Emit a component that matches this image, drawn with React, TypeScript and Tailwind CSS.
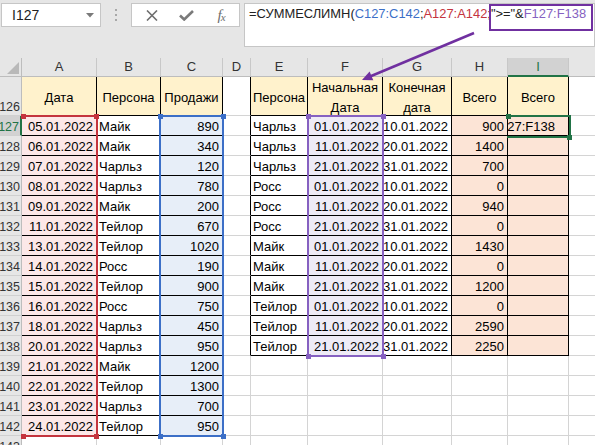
import React from 'react';

const colW = ['w-[22px]', 'w-[75px]', 'w-[64px]', 'w-[62px]', 'w-[28px]', 'w-[57px]', 'w-[75px]', 'w-[69px]', 'w-[56px]', 'w-[61px]', 'w-[30px]'];
// J is cut off by the window edge, so its letter is not shown
const letters = ['', 'A', 'B', 'C', 'D', 'E', 'F', 'G', 'H', 'I', ''];

const sales: string[][] = [
  ['05.01.2022', 'Майк', '890'],
  ['06.01.2022', 'Майк', '340'],
  ['07.01.2022', 'Чарльз', '120'],
  ['08.01.2022', 'Чарльз', '780'],
  ['09.01.2022', 'Майк', '200'],
  ['11.01.2022', 'Тейлор', '670'],
  ['13.01.2022', 'Тейлор', '1020'],
  ['14.01.2022', 'Росс', '190'],
  ['15.01.2022', 'Тейлор', '900'],
  ['16.01.2022', 'Росс', '750'],
  ['18.01.2022', 'Чарльз', '450'],
  ['20.01.2022', 'Чарльз', '950'],
  ['21.01.2022', 'Майк', '1200'],
  ['22.01.2022', 'Тейлор', '1300'],
  ['23.01.2022', 'Чарльз', '700'],
  ['24.01.2022', 'Тейлор', '950'],
];

const totals: string[][] = [
  ['Чарльз', '01.01.2022', '10.01.2022', '900'],
  ['Чарльз', '11.01.2022', '20.01.2022', '1400'],
  ['Чарльз', '21.01.2022', '31.01.2022', '700'],
  ['Росс', '01.01.2022', '10.01.2022', '0'],
  ['Росс', '11.01.2022', '20.01.2022', '940'],
  ['Росс', '21.01.2022', '31.01.2022', '0'],
  ['Майк', '01.01.2022', '10.01.2022', '1430'],
  ['Майк', '11.01.2022', '20.01.2022', '0'],
  ['Майк', '21.01.2022', '31.01.2022', '1200'],
  ['Тейлор', '01.01.2022', '10.01.2022', '0'],
  ['Тейлор', '11.01.2022', '20.01.2022', '2590'],
  ['Тейлор', '21.01.2022', '31.01.2022', '2250'],
];

const rows = Array.from({length: 18}, (_, i) => 126 + i);

function inTable(r: number, c: number) {
  return (c >= 1 && c <= 3 && r >= 126 && r <= 142) || (c >= 5 && c <= 9 && r >= 126 && r <= 138);
}

function fill(r: number, c: number) {
  if (r === 126 && inTable(r, c)) return 'bg-[#fff2cc]';
  if (c === 1 && r >= 127 && r <= 142) return 'bg-[#fce8e8]';
  if (c === 3 && r >= 127 && r <= 142) return 'bg-[#e7eef8]';
  if (c === 6 && r >= 127 && r <= 138) return 'bg-[#eeebf6]';
  if ((c === 8 || c === 9) && r >= 127 && r <= 138) return 'bg-[#fce4d6]';
  return 'bg-white';
}

function HeaderText({r, c}: {r: number; c: number}) {
  const labels: Record<number, string[]> = {
    1: ['Дата'],
    2: ['Персона'],
    3: ['Продажи'],
    5: ['Персона'],
    6: ['Начальная', 'Дата'],
    7: ['Конечная', 'дата'],
    8: ['Всего'],
    9: ['Всего'],
  };
  const lines = labels[c];
  if (!lines || r !== 126) return null;
  return (
    <div className="w-full flex flex-col items-center pt-[3px] leading-[20px]">
      {lines.map(l => <span key={l}>{l}</span>)}
    </div>
  );
}

function cellText(r: number, c: number): {text: string; right: boolean} | null {
  if (r >= 127 && r <= 142 && c >= 1 && c <= 3) {
    const v = sales[r - 127][c - 1];
    return {text: v, right: c !== 2};
  }
  if (r >= 127 && r <= 138 && c >= 5 && c <= 8) {
    const v = totals[r - 127][c - 5];
    return {text: v, right: c !== 5};
  }
  return null;
}

function Handle({cls}: {cls: string}) {
  return <div className={`absolute w-[5px] h-[5px] ${cls}`} />;
}

function Toolbar() {
  return (
    <div className="h-[58px] bg-[#e6e6e6] flex items-start pt-[3px] font-['Liberation_Sans',sans-serif]">
      <div className="ml-[1px] w-[102px] h-[24px] bg-white border border-[#c6c6c6] flex items-center justify-between pl-[10px] pr-[6px] text-[14px] text-[#222]">
        <span>I127</span>
        <svg width="8" height="5" viewBox="0 0 8 5"><path d="M0 0h8L4 4.5z" fill="#7a7a7a" /></svg>
      </div>
      <div className="w-[31px] h-[24px] flex flex-col items-center justify-center gap-[3px] pl-[1px]">
        <div className="w-[2px] h-[2px] bg-[#a8a8a8]" />
        <div className="w-[2px] h-[2px] bg-[#a8a8a8]" />
        <div className="w-[2px] h-[2px] bg-[#a8a8a8]" />
      </div>
      <div className="w-[109px] h-[24px] bg-white border border-[#c6c6c6] flex items-center pl-[2px]">
        <div className="w-[36px] flex justify-center">
          <svg width="12" height="11" viewBox="0 0 12 11"><path d="M1 0.5l10 10M11 0.5l-10 10" stroke="#6e6e6e" strokeWidth="1.6" /></svg>
        </div>
        <div className="w-[36px] flex justify-center">
          <svg width="15" height="11" viewBox="0 0 15 11"><path d="M1 5.5l4.2 4L14 1" stroke="#7a7a7a" strokeWidth="2.6" fill="none" /></svg>
        </div>
        <div className="w-[36px] flex justify-center items-end text-[#6e6e6e] font-['Liberation_Serif',serif] italic leading-none">
          <span className="text-[15px]">f</span>
          <span className="text-[11px] -ml-[1px]">x</span>
        </div>
      </div>
      <div className="ml-[4px] w-[360px] h-[44px] bg-white border border-[#c6c6c6] pl-[4px] pt-[2px] text-[12.9px] leading-[15px] whitespace-nowrap text-[#222]">
        =СУММЕСЛИМН(<span className="text-[#3c6fc7]">C127:C142</span>;<span className="text-[#c4343e]">A127:A142</span>;"&gt;="&amp;<span className="text-[#8661c1]">F127:F138</span>
      </div>
    </div>
  );
}

function Sheet() {
  return (
    <div className="font-['Liberation_Sans',sans-serif] text-[13px] text-black">
      {/* column letters */}
      <div className="flex h-[19px]">
        {letters.map((l, c) => {
          if (c === 0) {
            return (
              <div key={c} className={`${colW[c]} shrink-0 bg-[#e6e6e6] border-r border-b border-[#bdbdbd] flex items-end justify-end pr-[2px] pb-[2px]`}>
                <svg width="12" height="12" viewBox="0 0 12 12"><path d="M12 0V12H0z" fill="#b9b9b9" /></svg>
              </div>
            );
          }
          const sel = c === 9;
          return (
            <div
              key={c}
              className={`${colW[c]} shrink-0 flex items-center justify-center border-r border-r-[#c8c8c8] text-[13px] ${sel ? 'bg-[#d2d2d2] border-b-2 border-b-[#217346] text-[#217346]' : 'bg-[#e6e6e6] border-b border-b-[#bdbdbd] text-[#333]'}`}
            >
              {l}
            </div>
          );
        })}
      </div>

      {rows.map(r => (
        <div key={r} className={`flex ${r === 126 ? 'h-[39px]' : 'h-[20px]'}`}>
          {letters.map((_, c) => {
            if (c === 0) {
              const sel = r === 127;
              return (
                <div
                  key={c}
                  className={`${colW[c]} shrink-0 flex items-end justify-end overflow-hidden text-[12.5px] leading-[16px] border-b border-b-[#d0d0d0] ${sel ? 'bg-[#d2d2d2] text-[#217346] border-r-2 border-r-[#217346]' : 'bg-[#e6e6e6] text-[#333] border-r border-r-[#bdbdbd]'}`}
                >
                  <span className="pr-[1px]">{r}</span>
                </div>
              );
            }
            const rightBlack = inTable(r, c) || inTable(r, c + 1);
            const bottomBlack = inTable(r, c) || inTable(r + 1, c);
            const t = cellText(r, c);
            return (
              <div
                key={c}
                className={`${colW[c]} shrink-0 overflow-hidden whitespace-nowrap flex border-r border-b ${rightBlack ? 'border-r-black' : 'border-r-[#d4d4d4]'} ${bottomBlack ? 'border-b-black' : 'border-b-[#d4d4d4]'} ${fill(r, c)} ${r === 126 ? 'items-center' : 'items-end'}`}
              >
                {r === 126 && <HeaderText r={r} c={c} />}
                {t && (
                  <span className={`w-full leading-[16px] ${t.right ? 'text-right pr-[3px]' : 'text-left pl-[2px]'}`}>{t.text}</span>
                )}
                {r === 127 && c === 9 && (
                  <span className="leading-[16px] -ml-[8px]">127:F138</span>
                )}
              </div>
            );
          })}
        </div>
      ))}
    </div>
  );
}

export default function App() {
  return (
    <div className="w-[595px] h-[445px] overflow-hidden bg-white relative">
      <Toolbar />
      <Sheet />

      {/* range highlights */}
      <div className="absolute left-[22px] top-[115px] w-[76px] h-[322px] border-2 border-l-0 border-[#c4343e]" />
      <Handle cls="left-[21px] top-[114px] bg-[#c4343e]" />
      <Handle cls="left-[94px] top-[114px] bg-[#c4343e]" />
      <Handle cls="left-[21px] top-[434px] bg-[#c4343e]" />
      <Handle cls="left-[94px] top-[434px] bg-[#c4343e]" />

      <div className="absolute left-[159px] top-[115px] w-[65px] h-[322px] border-2 border-[#3c6fc7]" />
      <Handle cls="left-[158px] top-[114px] bg-[#3c6fc7]" />
      <Handle cls="left-[221px] top-[114px] bg-[#3c6fc7]" />
      <Handle cls="left-[158px] top-[434px] bg-[#3c6fc7]" />
      <Handle cls="left-[221px] top-[434px] bg-[#3c6fc7]" />

      <div className="absolute left-[307px] top-[115px] w-[77px] h-[242px] border-2 border-[#8661c1]" />
      <Handle cls="left-[306px] top-[114px] bg-[#8661c1]" />
      <Handle cls="left-[381px] top-[114px] bg-[#8661c1]" />
      <Handle cls="left-[306px] top-[354px] bg-[#8661c1]" />
      <Handle cls="left-[381px] top-[354px] bg-[#8661c1]" />

      <div className="absolute left-[507px] top-[115px] w-[64px] h-[23px] border-2 border-l-0 border-[#217346]" />
      <Handle cls="left-[506px] top-[114px] bg-[#217346]" />
      <Handle cls="left-[567px] top-[135px] bg-[#217346]" />

      {/* annotation */}
      <div className="absolute left-[489px] top-[4px] w-[104px] h-[27px] border-2 border-[#7030a0]" />
      <svg className="absolute left-0 top-0 pointer-events-none" width="595" height="445" viewBox="0 0 595 445">
        <line x1="474" y1="33" x2="370" y2="76.5" stroke="#7030a0" strokeWidth="2.5" />
        <polygon points="362,80 373.3,80.3 369.6,71.6" fill="#7030a0" />
      </svg>
    </div>
  );
}
